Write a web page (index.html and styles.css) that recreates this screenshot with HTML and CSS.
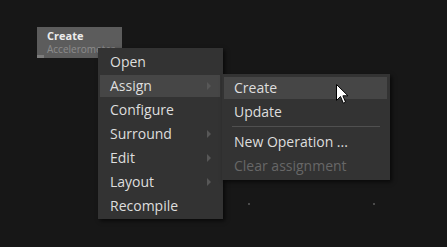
FILE: index.html
```html
<!DOCTYPE html>
<html lang="en">
<head>
  <title>Graph Editor</title>
  <meta charset="UTF-8">
  <meta name="viewport" content="width=device-width, initial-scale=1">
  <link rel="stylesheet" href="styles.css">
</head>
<body>

  <div class="canvas">
    <div class="node">
      <div class="node-title">Create</div>
      <div class="node-sub">Accelerometer</div>
      <span class="node-port"></span>
    </div>

    <span class="grid-dot dot-a"></span>
    <span class="grid-dot dot-b"></span>

    <ul class="menu main-menu">
      <li>Open</li>
      <li class="active has-sub">Assign</li>
      <li>Configure</li>
      <li class="has-sub">Surround</li>
      <li class="has-sub">Edit</li>
      <li class="has-sub">Layout</li>
      <li>Recompile</li>
    </ul>

    <ul class="menu sub-menu">
      <li class="active">Create</li>
      <li>Update</li>
      <li class="separator"></li>
      <li>New Operation ...</li>
      <li class="disabled">Clear assignment</li>
    </ul>

    <svg class="cursor" width="13" height="21" viewBox="0 0 13 21">
      <path d="M0.5 0.5 L0.5 16.5 L4.5 12.5 L7.3 19.2 L9.6 18.2 L6.9 11.8 L12 11.8 Z" fill="#fff" stroke="#000" stroke-width="1"/>
    </svg>
  </div>

</body>
</html>
```

FILE: styles.css
```css
* {
  box-sizing: border-box;
}

body {
  margin: 0;
  background-color: #171717;
  font-family: "Open Sans", "Noto Sans", sans-serif;
}

.canvas {
  position: relative;
  width: 447px;
  height: 247px;
  overflow: hidden;
}

/* node on the graph canvas */
.node {
  position: absolute;
  left: 37px;
  top: 27px;
  width: 85px;
  height: 31px;
  padding: 1px 0 0 10px;
  background-color: #5c5c5c;
  overflow: hidden;
  white-space: nowrap;
}

.node-title {
  height: 15px;
  font-size: 11px;
  font-weight: bold;
  line-height: 15px;
  color: #ececec;
}

.node-sub {
  height: 14px;
  margin-top: -1px;
  font-size: 10px;
  line-height: 14px;
  color: #8c8c8c;
}

.node-port {
  position: absolute;
  left: 0;
  bottom: 0;
  width: 7px;
  height: 3px;
  background-color: #7c7c7c;
}

.grid-dot {
  position: absolute;
  width: 2px;
  height: 2px;
  background-color: #4a4a4a;
}

.dot-a {
  left: 248px;
  top: 203px;
}

.dot-b {
  left: 373px;
  top: 203px;
}

/* context menus */
.menu {
  position: absolute;
  display: flex;
  flex-direction: column;
  list-style: none;
  margin: 0;
  background-color: #333333;
  box-shadow: 2px 2px 4px rgba(0, 0, 0, 0.6);
}

.main-menu {
  left: 98px;
  top: 48px;
  width: 125px;
  padding: 2px 0 1px 0;
}

.sub-menu {
  left: 222px;
  top: 74px;
  width: 168px;
  padding: 2px 0 2px 0;
}

.menu li {
  position: relative;
  height: 22px;
  margin: 1px 3px 1px 2px;
  padding-left: 10px;
  font-size: 14px;
  line-height: 22px;
  color: #dedede;
  white-space: nowrap;
}

.menu li.active {
  background-color: #464646;
}

.menu li.disabled {
  color: #676767;
}

.menu li.has-sub::after {
  content: "";
  position: absolute;
  right: 9px;
  top: 7px;
  border-left: 4px solid #575757;
  border-top: 4px solid transparent;
  border-bottom: 4px solid transparent;
}

.menu li.separator {
  height: 1px;
  margin: 2px 10px 3px 10px;
  padding: 0;
  background-color: #505050;
}

.cursor {
  position: absolute;
  left: 336px;
  top: 84px;
}
```
